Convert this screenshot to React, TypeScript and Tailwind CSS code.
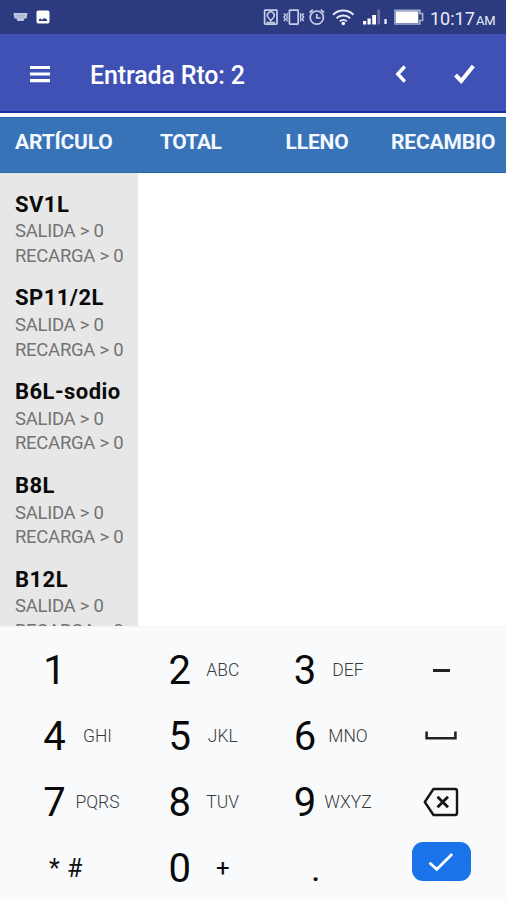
import React from "react";

const articles = ["SV1L", "SP11/2L", "B6L-sodio", "B8L", "B12L"];

function StatusBar() {
  return (
    <div className="flex h-[34px] shrink-0 items-center bg-[#2c3b80]">
      <svg className="ml-[13px]" width="15" height="10" viewBox="0 0 15 10">
        <path d="M0.5 1H14.5L13.5 6.5H11.5L10.5 9H4.5L3.5 6.5H1.5Z" fill="#c3c8e0" />
        <path d="M2.5 3.2H12.5M3.5 5.2H11.5" stroke="#8f98c0" strokeWidth="0.8" strokeDasharray="1.3 0.7" />
      </svg>
      <svg className="ml-[8px]" width="14" height="14" viewBox="0 0 14 14">
        <rect x="0.5" y="0.5" width="13" height="13" rx="1.8" fill="#fff" />
        <path d="M3 11V9.3L4.5 8.5L6 9.8L8.3 8L11 9.5V11Z" fill="#2c3b80" />
      </svg>
      <div className="ml-auto flex items-center">
        <svg className="mt-[2px]" width="166" height="20" viewBox="0 0 166 20" fill="none" stroke="#c9cee6" strokeWidth="1.7">
          <rect x="2.6" y="2.2" width="12.4" height="14" rx="0.6" />
          <path d="M8.8 12.8L6.1 9.4A3.4 3.4 0 1 1 11.5 9.4Z" strokeWidth="1.5" />
          <path d="M4.4 14.6H13" strokeWidth="1.6" />
          <rect x="27.4" y="2.2" width="8.8" height="14" rx="0.6" />
          <path d="M25 5V13.5M38.7 5V13.5" strokeWidth="1.3" />
          <path d="M21.8 5.5L23.4 7.1L22 9.1L23.4 11.1L21.8 13M41.8 5.5L40.2 7.1L41.6 9.1L40.2 11.1L41.8 13" strokeWidth="1.4" />
          <circle cx="54.8" cy="9.6" r="6.6" />
          <path d="M54.8 5.9V10H58.6M47.5 4.6L50.8 1.6M62.1 4.6L58.8 1.6" strokeWidth="1.7" />
          <path d="M71.1 6.7A14.6 14.6 0 0 1 91.5 6.7M74.5 10.2A9.8 9.8 0 0 1 88.1 10.2M77.8 13.4A5 5 0 0 1 84.8 13.4" stroke="#e6e8f5" strokeWidth="2" />
          <circle cx="81.3" cy="15.5" r="1.8" fill="#fff" stroke="none" />
          <g fill="#fff" stroke="none">
            <rect x="101" y="13" width="3.2" height="3.5" />
            <rect x="105.5" y="10.5" width="3.2" height="6" />
            <rect x="110.2" y="7" width="3.8" height="9.5" />
            <rect x="115.3" y="1.5" width="2.8" height="15" fill="#66719f" />
            <rect x="122.3" y="11" width="2.5" height="5" fill="#dfe2f1" />
          </g>
          <path d="M133 2.4H157.8V5.7H160.6V12.5H157.8V16H133Z" stroke="#a4abcd" strokeWidth="1.7" />
          <rect x="134" y="3.4" width="22.3" height="11.6" fill="#fff" stroke="none" />
        </svg>
        <div className="ml-[2px] mr-[10px] flex h-[34px] w-[66px] items-baseline whitespace-nowrap pt-[2px] text-[#e9ebf7]">
          <span className="w-[45px] text-[18px] leading-[34px]">10:17</span>
          <span className="ml-[1px] text-[13px] tracking-[-0.3px]">AM</span>
        </div>
      </div>
    </div>
  );
}

function AppBar() {
  return (
    <div className="flex h-[79px] shrink-0 items-start border-b-2 border-[#1e2fa3] bg-[#3f51b5] pt-[24px] text-white">
      <svg className="ml-[29px] mt-[7px]" width="22" height="18" viewBox="0 0 22 18">
        <path d="M1 2.5H21M1 9H21M1 15.7H21" stroke="#fff" strokeWidth="3.2" />
      </svg>
      <div className="ml-[39px] mt-[1px] w-[170px] whitespace-nowrap text-[25px] font-medium leading-[34px] tracking-[-0.15px]">Entrada Rto: 2</div>
      <svg className="ml-[133px] mt-[5px]" width="16" height="22" viewBox="0 0 16 22" fill="none">
        <path d="M11.8 3.5L4.8 11L11.8 18.5" stroke="#fff" strokeWidth="3.4" />
      </svg>
      <svg className="ml-[43px] mt-[5px]" width="24" height="22" viewBox="0 0 24 22" fill="none">
        <path d="M3.5 12L9.2 18L21.3 3" stroke="#fff" strokeWidth="4" />
      </svg>
    </div>
  );
}

function TableHeader() {
  return (
    <div className="mt-[4px] flex h-[56px] shrink-0 whitespace-nowrap border-y border-[#2468ad] bg-[#3873b8] text-[21px] font-bold leading-[49px] tracking-[-0.15px] text-[#f4f8ff]">
      <div className="w-[145px] pl-[15px]">ARTÍCULO</div>
      <div className="w-[126px] pl-[15px] tracking-[-0.5px]">TOTAL</div>
      <div className="w-[105px] pl-[14.5px]">LLENO</div>
      <div className="pl-[15px]">RECAMBIO</div>
    </div>
  );
}

function Article({ name }: { name: string }) {
  return (
    <div className="h-[93.75px] whitespace-nowrap pl-[15px] pt-[17.6px]">
      <div className="text-[22px] font-bold leading-[28px] tracking-[0.45px] text-[#0a0a0a]">{name}</div>
      <div className="pt-[0.8px] text-[18.5px] leading-[24.5px] tracking-[-0.28px] text-[#737373]">SALIDA &gt; 0</div>
      <div className="text-[18.5px] leading-[24.5px] tracking-[-0.28px] text-[#737373]">RECARGA &gt; 0</div>
    </div>
  );
}

function Key({ digit, letters }: { digit: string; letters?: string }) {
  return (
    <div className="flex h-[66px] items-center whitespace-nowrap">
      <div className="ml-[32.5px] w-[24px] pt-[2px] text-center text-[40px] leading-[66px] text-[#0a0a0a]">{digit}</div>
      <div className="ml-[1.5px] w-[59px] text-center text-[17.5px] font-light text-[#3a3a3a]">{letters}</div>
    </div>
  );
}

function Keypad() {
  return (
    <div className="grid h-[274px] shrink-0 grid-cols-[125.25px_125.25px_125.25px_110.5px] grid-rows-[66px_66px_66px_66px] overflow-hidden border-t border-[#f2f3f5] bg-[#f9fafc] pl-[10px] pt-[10px]">
      <Key digit="1" />
      <Key digit="2" letters="ABC" />
      <Key digit="3" letters="DEF" />
      <div className="flex items-center justify-center">
        <div className="h-[3px] w-[17px] bg-[#222]" />
      </div>
      <Key digit="4" letters="GHI" />
      <Key digit="5" letters="JKL" />
      <Key digit="6" letters="MNO" />
      <div className="flex items-center justify-center">
        <svg width="32" height="10" viewBox="0 0 32 10" fill="none">
          <path d="M1.6 0.4V7.2H30.4V0.4" stroke="#222" strokeWidth="2.6" />
        </svg>
      </div>
      <Key digit="7" letters="PQRS" />
      <Key digit="8" letters="TUV" />
      <Key digit="9" letters="WXYZ" />
      <div className="flex items-center justify-center">
        <svg width="36" height="30" viewBox="0 0 36 30" fill="none" stroke="#151515" strokeWidth="2.4">
          <path d="M10.5 2H32A2 2 0 0 1 34 4V26A2 2 0 0 1 32 28H10.5L1.8 15Z" strokeLinejoin="round" />
          <path d="M14.5 9.8L25 20.3M25 9.8L14.5 20.3" strokeWidth="2.8" />
        </svg>
      </div>
      <div className="flex text-[25px] leading-[67px] text-[#111]">
        <span className="ml-[39px] w-[18px]">*</span>
        <span className="tracking-[-0.5px]">#</span>
      </div>
      <div className="flex h-[66px] items-center">
        <div className="ml-[32.5px] w-[24px] pt-[2px] text-center text-[40px] leading-[66px] text-[#0a0a0a]">0</div>
        <div className="ml-[1.5px] w-[59px] text-center text-[24px] leading-[66px] text-[#0a0a0a]">+</div>
      </div>
      <div className="pl-[51px] text-[30px] font-medium leading-[71px] text-[#111]">.</div>
      <div className="flex justify-center pt-[7px]">
        <div className="flex h-[39px] w-[59px] items-center justify-center rounded-[11px] bg-[#1a73e8]">
          <svg width="26" height="20" viewBox="0 0 26 20" fill="none">
            <path d="M1.5 10.8L8.8 17.3L24.2 2" stroke="#fff" strokeWidth="2.8" />
          </svg>
        </div>
      </div>
    </div>
  );
}

export default function App() {
  return (
    <div className="flex h-[900px] w-[506px] flex-col overflow-hidden bg-white font-[Roboto,sans-serif]">
      <StatusBar />
      <AppBar />
      <TableHeader />
      <div className="min-h-0 w-[138px] flex-1 overflow-hidden bg-[#e7e7e7]">
        {articles.map((name) => (
          <Article key={name} name={name} />
        ))}
      </div>
      <Keypad />
    </div>
  );
}
